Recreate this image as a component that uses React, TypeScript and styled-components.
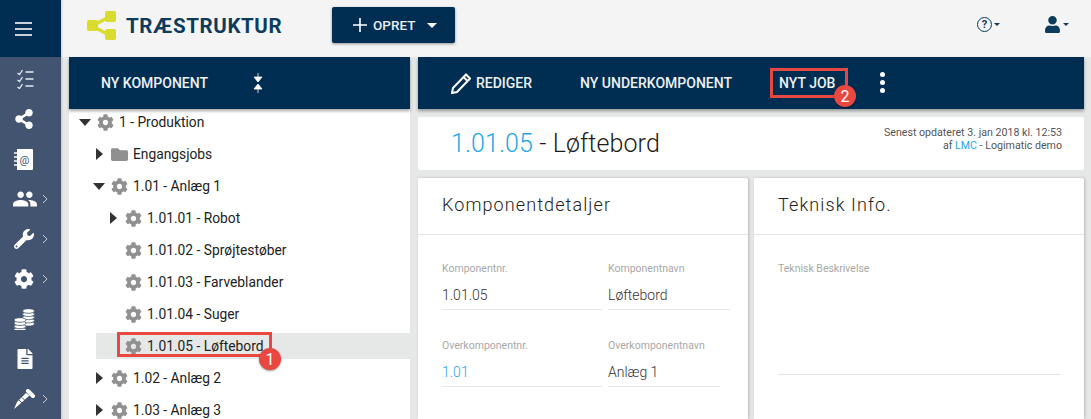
import React from "react";
import styled, { createGlobalStyle } from "styled-components";
import { FaCog, FaFolder, FaShareAlt, FaWrench, FaFileAlt, FaUser } from "react-icons/fa";
import { MdPeople } from "react-icons/md";

const Global = createGlobalStyle`
  html, body { margin: 0; padding: 0; background: #e6e8e7; }
  body { font-family: Roboto, "Liberation Sans", sans-serif; overflow: hidden; }
  * { box-sizing: border-box; }
`;

const Page = styled.div`display: flex; width: 1091px; height: 419px; overflow: hidden; background: #e6e8e7;`;
const Sidebar = styled.aside`width: 61px; flex: none; background: #425470; display: flex; flex-direction: column; box-shadow: 1px 0 2px rgba(0,0,0,.15); z-index: 3;`;
const Burger = styled.div`height: 57px; background: #002e52; display: flex; flex-direction: column; align-items: flex-start; justify-content: center; gap: 4px; padding: 1px 0 0 15px;`;
const BurgerLine = styled.span`width: 17px; height: 2px; background: #c9d2da;`;
const SideList = styled.div`display: flex; flex-direction: column; padding-top: 2px;`;
const SideItem = styled.div`height: 40px; position: relative; display: flex; align-items: center; padding-left: 14px; color: #fff; font-size: 20px;`;
const Chevron = styled.svg`position: absolute; left: 42px; top: 15px; width: 6px; height: 10px;`;

const Main = styled.div`flex: 1; display: flex; flex-direction: column; min-width: 0;`;
const Header = styled.header`height: 57px; flex: none; background: #f4f4f4; display: flex; align-items: center; padding: 0 22px 0 26px;`;
const Logo = styled.svg`width: 30px; height: 30px; margin-right: 9px; margin-bottom: 5px;`;
const Brand = styled.div`font-size: 20.5px; font-weight: 700; letter-spacing: .62px; color: #0e3a5c; margin-bottom: 5px; width: 159px; white-space: nowrap;`;
const CreateButton = styled.div`margin-left: 47px; margin-bottom: 7px; width: 123px; height: 36px; background: #002e52; border-radius: 2px; box-shadow: 0 1px 3px rgba(0,0,0,.4); color: #e8edf1; font-size: 13.5px; font-weight: 500; display: flex; align-items: center; padding-left: 21px;`;
const PlusIcon = styled.svg`width: 14px; height: 14px; margin-right: 6px;`;
const Caret = styled.span<{ $size?: number; $color?: string }>`
  display: inline-block; width: 0; height: 0;
  border-left: ${p => p.$size ?? 5}px solid transparent;
  border-right: ${p => p.$size ?? 5}px solid transparent;
  border-top: ${p => p.$size ?? 5}px solid ${p => p.$color ?? "#fff"};
`;
const HeaderTools = styled.div`margin-left: auto; display: flex; align-items: center; gap: 44px; color: #0e3a5c; padding-bottom: 9px;`;
const Tool = styled.div`display: flex; align-items: center; gap: 2px;`;
const HelpRing = styled.div`width: 15px; height: 15px; border: 1.5px solid #0e3a5c; border-radius: 50%; font-size: 11px; font-weight: 700; display: flex; align-items: center; justify-content: center;`;

const Content = styled.div`flex: 1; display: flex; padding: 0 7px 0 8px; gap: 8px; min-height: 0;`;
const LeftCol = styled.section`width: 341px; flex: none; display: flex; flex-direction: column; background: #fff;`;
const RightCol = styled.section`flex: 1; display: flex; flex-direction: column; min-width: 0;`;
const NavBar = styled.nav`height: 52px; flex: none; background: #002e52; box-shadow: 0 2px 3px rgba(0,0,0,.35); display: flex; align-items: center; color: #eef1f4; font-size: 14px; font-weight: 500; white-space: nowrap; z-index: 2;`;
const NavText = styled.span<{ $left: number }>`margin-left: ${p => p.$left}px; display: inline-flex; align-items: center; position: relative;`;
const MarkerBox = styled.span`position: absolute; border: 3px solid #e8483f; pointer-events: none;`;
const JobMarker = styled(MarkerBox)`left: -9px; right: -13px; top: -7px; height: 30px;`;
const TreeMarker = styled(MarkerBox)`left: 21px; top: -1px; width: 155px; height: 25px;`;
const Badge = styled.span`position: absolute; width: 22px; height: 22px; border-radius: 50%; background: #e8483f; color: #fff; box-shadow: 0 1px 2px rgba(0,0,0,.4); font-size: 16px; font-weight: 400; display: flex; align-items: center; justify-content: center;`;
const JobBadge = styled(Badge)`left: 55px; top: 10px;`;
const TreeBadge = styled(Badge)`left: 163px; top: 15px;`;
const CollapseIcon = styled.svg`width: 10px; height: 20px; margin-left: 45px;`;
const Dots = styled.div`margin-left: 45px; display: flex; flex-direction: column; gap: 3px; margin-top: -1px;`;
const Dot = styled.span`width: 5px; height: 5px; border-radius: 50%; background: #fff;`;

const Tree = styled.div`display: flex; flex-direction: column; margin-top: -3px; overflow: hidden;`;
const Row = styled.div<{ $indent: number }>`height: 32px; flex: none; display: flex; align-items: center; padding-left: ${p => p.$indent}px; font-size: 13.8px; color: #222; white-space: nowrap;`;
const ArrowSlot = styled.span`width: 16px; flex: none; display: flex; align-items: center; justify-content: center; margin-right: 1px;`;
const ArrowDown = styled.span`width: 0; height: 0; border-left: 6px solid transparent; border-right: 6px solid transparent; border-top: 7px solid #333;`;
const ArrowRight = styled.span`width: 0; height: 0; border-top: 6px solid transparent; border-bottom: 6px solid transparent; border-left: 7px solid #333;`;
const NodeIcon = styled.span`width: 17px; height: 18px; flex: none; margin: 0 5px 0 3px; color: #909090; font-size: 17px; display: flex; align-items: center; justify-content: center;`;
const SelectedBand = styled.div`height: 26px; flex: none; margin: 3px 0 3px 27px; position: relative; background: #e6e8e7; display: flex; align-items: center; padding-left: 15px; font-size: 13.8px; color: #222; white-space: nowrap;`;
const SelectedIcon = styled(NodeIcon)`margin: 0 5px 0 14px;`;

const TitleCard = styled.div`height: 53px; flex: none; margin-top: 8px; background: #fff; border-radius: 2px; display: flex; align-items: center; justify-content: space-between; padding: 0 22px 0 33px;`;
const Title = styled.h1`margin: 0; font-size: 25px; font-weight: 300; letter-spacing: .1px; color: #1c1c1c; white-space: nowrap;`;
const Blue = styled.span`color: #1ea7e8;`;
const Meta = styled.div`font-size: 10.65px; line-height: 13px; color: #555; text-align: right; font-weight: 400; margin-top: -10px; white-space: nowrap;`;
const Cards = styled.div`flex: 1; display: flex; gap: 6px; margin-top: 8px; min-height: 0;`;
const Card = styled.div<{ $width: number }>`width: ${p => p.$width}px; flex: none; background: #fff; border-radius: 2px 2px 0 0; box-shadow: 1px 0 3px rgba(0,0,0,.2); overflow: hidden;`;
const CardHead = styled.h2`margin: 0; height: 57px; border-bottom: 1px solid #e4e4e4; padding: 0 24px 3px 24px; display: flex; align-items: center; font-size: 18px; font-weight: 300; letter-spacing: 1.1px; color: #222; white-space: nowrap;`;
const FieldGrid = styled.div`display: grid; grid-template-columns: 160px 122px; column-gap: 6px; padding: 28px 0 0 24px; row-gap: 30px;`;
const Field = styled.div<{ $short?: boolean }>`height: 47px; border-bottom: 1px solid #e8e8e8; display: flex; flex-direction: column; ${p => p.$short ? "width: 112px;" : ""}`;
const Label = styled.div`font-size: 10.5px; line-height: 12px; color: #a8a8a8; white-space: nowrap;`;
const Value = styled.div<{ $link?: boolean }>`font-size: 14px; margin-top: 10px; line-height: 20px; font-weight: 300; color: ${p => p.$link ? "#1ea7e8" : "#333"}; white-space: nowrap;`;
const TechBody = styled.div`margin: 28px 24px 0; height: 112px; border-bottom: 1px solid #e4e4e4;`;

const Chev = () => (
  <Chevron viewBox="0 0 6 10"><path d="M1 1l4 4-4 4" fill="none" stroke="#c5ccd6" strokeWidth="1" /></Chevron>
);

const rows: { label: string; indent: number; arrow?: "down" | "right"; folder?: boolean }[] = [
  { label: "1 - Produktion", indent: 8, arrow: "down" },
  { label: "Engangsjobs", indent: 22, arrow: "right", folder: true },
  { label: "1.01 - Anlæg 1", indent: 22, arrow: "down" },
  { label: "1.01.01 - Robot", indent: 36, arrow: "right" },
  { label: "1.01.02 - Sprøjtestøber", indent: 36 },
  { label: "1.01.03 - Farveblander", indent: 36 },
  { label: "1.01.04 - Suger", indent: 36 },
];
const after = [
  { label: "1.02 - Anlæg 2" },
  { label: "1.03 - Anlæg 3" },
];

const TreeRow = ({ label, indent, arrow, folder }: { label: string; indent: number; arrow?: "down" | "right"; folder?: boolean }) => (
  <Row $indent={indent}>
    <ArrowSlot>{arrow === "down" ? <ArrowDown /> : arrow === "right" ? <ArrowRight /> : null}</ArrowSlot>
    <NodeIcon>{folder ? <FaFolder /> : <FaCog />}</NodeIcon>
    {label}
  </Row>
);

const Stack = ({ x, y, n }: { x: number; y: number; n: number }) => (
  <g>
    {Array.from({ length: n }).map((_, i) => (
      <ellipse key={i} cx={x + 6} cy={y + (n - 1 - i) * 3.2 + 2} rx="6" ry="2.3" fill="#fff" stroke="#425470" strokeWidth=".8" />
    ))}
  </g>
);

export default function App() {
  return (
    <Page>
      <Global />
      <Sidebar>
        <Burger><BurgerLine /><BurgerLine /><BurgerLine /></Burger>
        <SideList>
          <SideItem>
            <svg width="19" height="20" viewBox="0 0 18 20" fill="none" stroke="#e8ecf0" strokeWidth="1.3" style={{ marginLeft: 2 }}>
              <path d="M1 4l2 1.500L6 1M1 11l2 1.500L6 8M1 18l2 1.500L6 15" /><path d="M9 3h8M9 10h8M9 17h8" />
            </svg>
          </SideItem>
          <SideItem><FaShareAlt /></SideItem>
          <SideItem>
            <svg width="19" height="21" viewBox="0 0 19 21">
              <path d="M3 0h15a1 1 0 0 1 1 1v19a1 1 0 0 1-1 1H3z" fill="#fff" />
              <path d="M0 4h5M0 8h5M0 12h5M0 16h5" stroke="#fff" strokeWidth="1.5" />
              <text x="10.5" y="14.5" fontSize="11" textAnchor="middle" fill="#425470" fontFamily="Roboto">@</text>
            </svg>
          </SideItem>
          <SideItem><MdPeople style={{ fontSize: 26, marginLeft: -2 }} /><Chev /></SideItem>
          <SideItem><FaWrench /><Chev /></SideItem>
          <SideItem><FaCog /><Chev /></SideItem>
          <SideItem>
            <svg width="21" height="21" viewBox="0 0 21 21">
              <g transform="translate(8.500 0)"><Stack x={0} y={0} n={5} /></g>
              <Stack x={0} y={9} n={4} />
            </svg>
          </SideItem>
          <SideItem><FaFileAlt style={{ marginLeft: 1 }} /></SideItem>
          <SideItem>
            <svg width="21" height="20" viewBox="0 0 21 20" fill="none">
              <path d="M14 2l5 5" stroke="#fff" strokeWidth="4" strokeLinecap="round" />
              <path d="M15.500 6.500L6 15l-6 5 3-7 9-9z" fill="#fff" />
              <path d="M5 11l3 3M8 8.500l3 3" stroke="#425470" strokeWidth="1" />
            </svg>
            <Chev />
          </SideItem>
        </SideList>
      </Sidebar>
      <Main>
        <Header>
          <Logo viewBox="0 0 30 30">
            <path d="M5 15L24 5M5 15l19 10" stroke="#d9dc2e" strokeWidth="3.5" />
            <rect x="0" y="9" width="11" height="11" rx="2" fill="#d9dc2e" />
            <rect x="18" y="0" width="11" height="11" rx="2" fill="#d9dc2e" />
            <rect x="18" y="18" width="11" height="11" rx="2" fill="#d9dc2e" />
          </Logo>
          <Brand>TRÆSTRUKTUR</Brand>
          <CreateButton>
            <PlusIcon viewBox="0 0 14 14"><path d="M7 0v14M0 7h14" stroke="#fff" strokeWidth="1.6" /></PlusIcon>
            OPRET
            <Caret style={{ marginLeft: 12 }} />
          </CreateButton>
          <HeaderTools>
            <Tool><HelpRing>?</HelpRing><Caret $size={3} $color="#0e3a5c" /></Tool>
            <Tool><FaUser style={{ fontSize: 17 }} /><Caret $size={3} $color="#0e3a5c" /></Tool>
          </HeaderTools>
        </Header>
        <Content>
          <LeftCol>
            <NavBar>
              <NavText $left={32}>NY KOMPONENT</NavText>
              <CollapseIcon viewBox="0 0 10 20">
                <path d="M5 0v7M5 13v7M1 4h8L5 9zM1 16h8L5 11z" fill="#fff" stroke="#fff" strokeWidth=".8" />
              </CollapseIcon>
            </NavBar>
            <Tree>
              {rows.map(r => <TreeRow key={r.label} {...r} />)}
              <SelectedBand>
                <SelectedIcon><FaCog /></SelectedIcon>
                1.01.05 - Løftebord
                <TreeMarker />
                <TreeBadge>1</TreeBadge>
              </SelectedBand>
              {after.map(r => <TreeRow key={r.label} {...r} indent={22} arrow="right" />)}
            </Tree>
          </LeftCol>
          <RightCol>
            <NavBar>
              <NavText $left={33}>
                <svg width="20" height="21" viewBox="0 0 20 21" fill="none" stroke="#fff" strokeWidth="2" style={{ marginRight: 5 }}>
                  <path d="M15 1.500l4 4L6 19l-5 1 1-5zM12.500 4l4 4" />
                </svg>
                REDIGER
              </NavText>
              <NavText $left={48}>NY UNDERKOMPONENT</NavText>
              <NavText $left={47}>
                NYT JOB
                <JobMarker />
                <JobBadge>2</JobBadge>
              </NavText>
              <Dots><Dot /><Dot /><Dot /></Dots>
            </NavBar>
            <TitleCard>
              <Title><Blue>1.01.05</Blue> - Løftebord</Title>
              <Meta>Senest opdateret 3. jan 2018 kl. 12:53<br />af <Blue>LMC</Blue> - Logimatic demo</Meta>
            </TitleCard>
            <Cards>
              <Card $width={330}>
                <CardHead>Komponentdetaljer</CardHead>
                <FieldGrid>
                  <Field><Label>Komponentnr.</Label><Value>1.01.05</Value></Field>
                  <Field><Label>Komponentnavn</Label><Value>Løftebord</Value></Field>
                  <Field><Label>Overkomponentnr.</Label><Value $link>1.01</Value></Field>
                  <Field $short><Label>Overkomponentnavn</Label><Value>Anlæg 1</Value></Field>
                </FieldGrid>
              </Card>
              <Card $width={330}>
                <CardHead>Teknisk Info.</CardHead>
                <TechBody><Label>Teknisk Beskrivelse</Label></TechBody>
              </Card>
            </Cards>
          </RightCol>
        </Content>
      </Main>
    </Page>
  );
}
